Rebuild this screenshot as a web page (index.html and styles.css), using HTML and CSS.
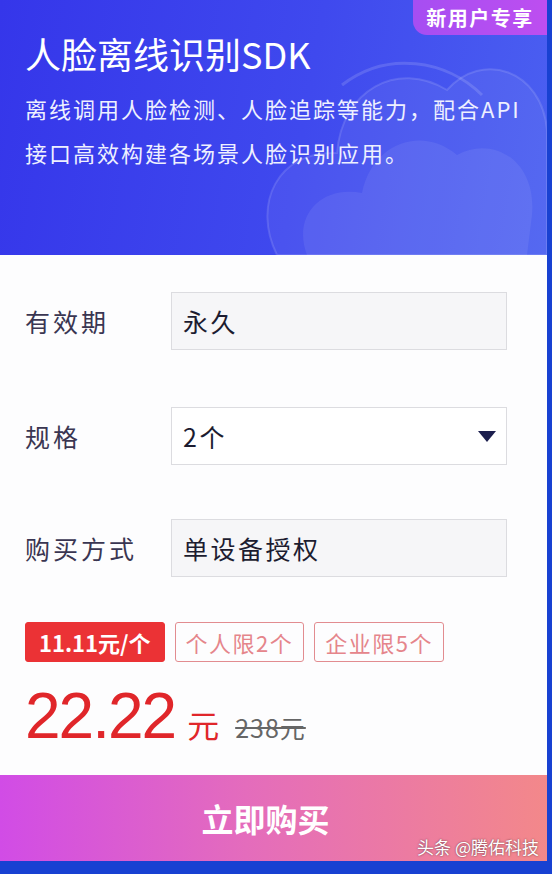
FILE: index.html
```html
<!DOCTYPE html>
<html lang="zh-CN">
  <head>
    <meta charset="UTF-8" />
    <meta name="viewport" content="width=device-width, initial-scale=1.0" />
    <title>人脸离线识别SDK</title>
    <link rel="stylesheet" href="styles.css">
  </head>
  <body>
    <div class="card">
      <div class="banner">
        <svg class="clouds" width="300" height="230" viewBox="0 0 300 230">
          <path d="M30 230 C5 180 30 125 90 128 C95 65 150 35 200 65 C235 25 295 45 300 105 L300 230 Z" fill="rgba(255,255,255,0.06)" stroke="rgba(255,255,255,0.13)" stroke-width="2"/>
          <path d="M60 230 C45 190 75 160 115 168 C125 118 175 100 210 130 C245 110 290 135 285 190 L280 230 Z" fill="rgba(255,255,255,0.07)"/>
          <path d="M95 60 C140 25 200 35 235 70" fill="none" stroke="rgba(255,255,255,0.14)" stroke-width="3"/>
        </svg>
        <div class="badge">新用户专享</div>
        <h1>人脸离线识别SDK</h1>
        <p>离线调用人脸检测、人脸追踪等能力，配合API<br>接口高效构建各场景人脸识别应用。</p>
      </div>

      <div class="form">
        <div class="row">
          <span class="label">有效期</span>
          <div class="field">永久</div>
        </div>
        <div class="row">
          <span class="label">规格</span>
          <div class="field select">2个<span class="caret"></span></div>
        </div>
        <div class="row">
          <span class="label">购买方式</span>
          <div class="field">单设备授权</div>
        </div>

        <div class="tags">
          <span class="tag solid">11.11元/个</span>
          <span class="tag">个人限2个</span>
          <span class="tag">企业限5个</span>
        </div>

        <div class="price">
          <span class="now">22.22</span>
          <span class="unit">元</span>
          <span class="old">238元</span>
        </div>
      </div>

      <button class="buy">立即购买</button>
      <span class="mark">头条 @腾佑科技</span>
    </div>
  </body>
</html>
```

FILE: styles.css
```css
body {
  margin: 0;
  height: 874px;
  background: #1841d2;
  font-family: "Noto Sans CJK SC", "Noto Sans", sans-serif;
  overflow: hidden;
}
.card {
  position: relative;
  width: 547px;
  height: 861px;
  background: #fdfdfe;
  display: flex;
  flex-direction: column;
}
.banner {
  position: relative;
  height: 255px;
  box-sizing: border-box;
  padding: 28px 0 0 25px;
  background: linear-gradient(100deg, #3536ea 0%, #3f49ee 55%, #4b60f1 100%);
  color: #fff;
  overflow: hidden;
}
.clouds {
  position: absolute;
  right: 0;
  bottom: 0;
}
.badge {
  position: absolute;
  top: 0;
  right: 0;
  width: 134px;
  height: 35px;
  line-height: 35px;
  text-align: center;
  font-size: 20px;
  font-weight: bold;
  letter-spacing: 1.5px;
  background: linear-gradient(90deg, #a64ef2, #bd4ef0);
  border-bottom-left-radius: 14px;
}
.banner h1 {
  position: relative;
  margin: 0;
  font-size: 36px;
  font-weight: normal;
  line-height: 50px;
}
.banner p {
  position: relative;
  margin: 8px 0 0;
  font-size: 22px;
  line-height: 44px;
  letter-spacing: 2px;
  color: #eef0ff;
}
.form {
  flex: 1;
  padding: 37px 0 0 25px;
}
.row {
  display: flex;
  align-items: center;
  height: 58px;
  margin-bottom: 57px;
}
.row:nth-child(2) {
  margin-bottom: 54px;
}
.row:nth-child(3) {
  margin-bottom: 45px;
}
.label {
  width: 146px;
  font-size: 25px;
  letter-spacing: 3px;
  color: #3a3652;
}
.field {
  width: 336px;
  height: 58px;
  box-sizing: border-box;
  padding-left: 11px;
  display: flex;
  align-items: center;
  font-size: 25px;
  letter-spacing: 2.5px;
  color: #1c1c30;
  background: #f6f6f8;
  border: 1px solid #dcdce0;
}
.select {
  background: #fff;
  justify-content: space-between;
  padding-right: 10px;
}
.caret {
  width: 0;
  height: 0;
  border-left: 9px solid transparent;
  border-right: 9px solid transparent;
  border-top: 11px solid #1c1f4e;
}
.tags {
  display: flex;
  gap: 10px;
}
.tag {
  height: 38px;
  padding: 0 10px;
  line-height: 38px;
  font-size: 22px;
  letter-spacing: 1.5px;
  color: #e5858b;
  border: 1px solid #e28c90;
  border-radius: 3px;
}
.tag.solid {
  padding: 0 13px;
  letter-spacing: 0;
  font-weight: bold;
  color: #fff;
  background: #eb3235;
  border-color: #eb3235;
}
.price {
  display: flex;
  align-items: baseline;
  margin-top: 16px;
  color: #e0262a;
}
.now {
  font-family: "Liberation Sans", sans-serif;
  font-size: 64px;
  line-height: 76px;
  letter-spacing: -2px;
}
.unit {
  margin-left: 12px;
  font-size: 32px;
}
.old {
  margin-left: 16px;
  font-size: 25px;
  letter-spacing: 1px;
  color: #666;
  text-decoration: line-through;
}
.buy {
  height: 86px;
  border: none;
  padding: 0 16px 0 0;
  font-family: inherit;
  font-size: 32px;
  font-weight: bold;
  color: #fff;
  background: linear-gradient(90deg, #d14ce6 0%, #e46cbc 45%, #f3888a 100%);
}
.mark {
  position: absolute;
  right: 8px;
  bottom: 2px;
  font-size: 17px;
  color: #fff;
  text-shadow: 0 0 2px rgba(0, 0, 0, 0.6);
}
```
